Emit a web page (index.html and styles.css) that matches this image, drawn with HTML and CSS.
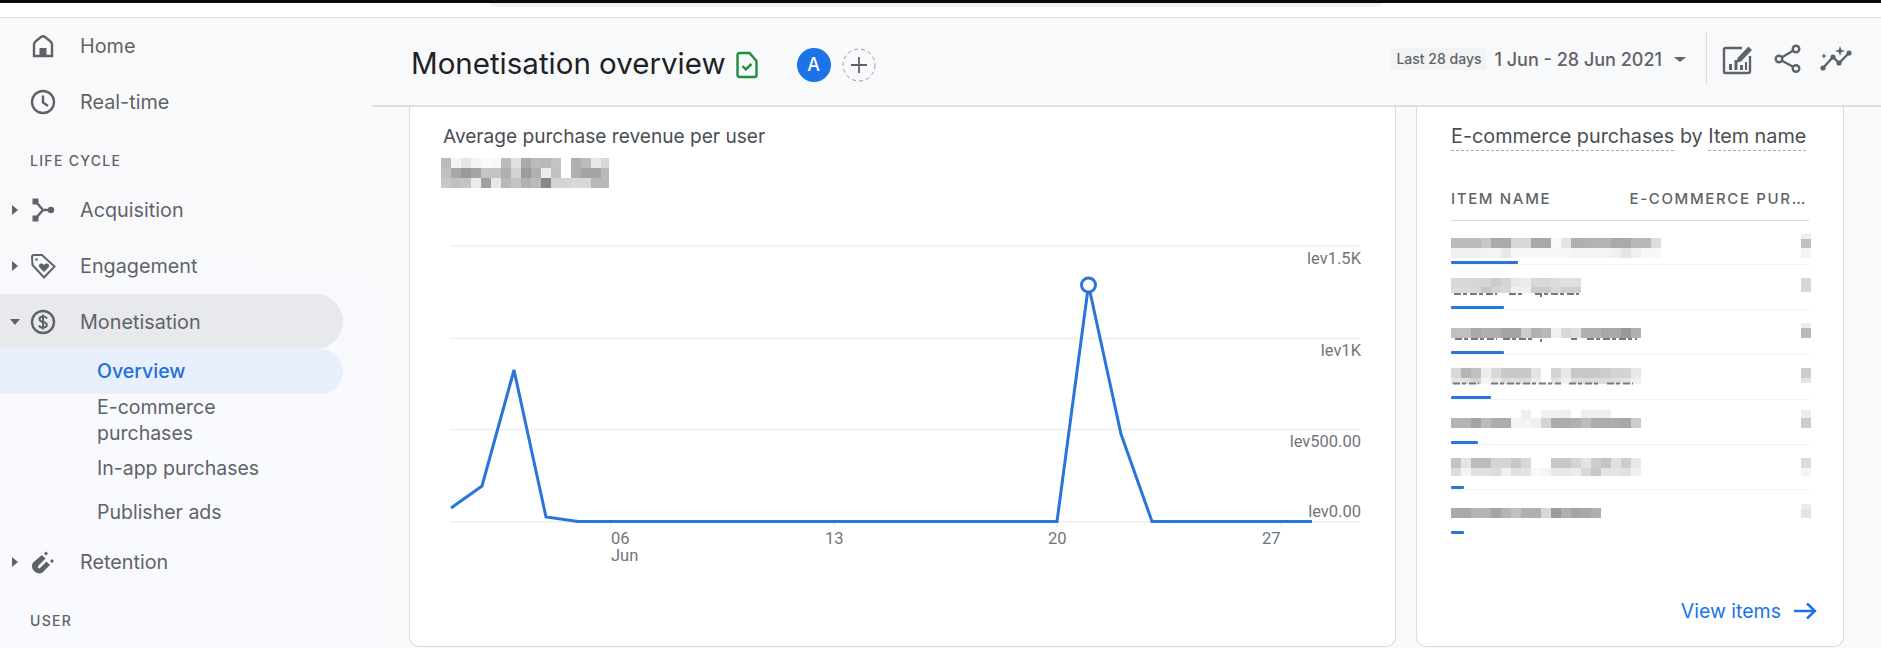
FILE: index.html
```html
<!DOCTYPE html>
<html lang="en">
<head>
<meta charset="utf-8">
<title>Monetisation overview</title>
<link rel="stylesheet" href="styles.css">
</head>
<body>
<div class="topbar"><div class="search-edge"></div></div>
<div class="app">
  <nav class="sidebar">
    <a class="nav-row">
      <span class="caret-slot"></span>
      <svg class="nav-icon" viewBox="0 0 28 28"><path class="ol" d="M5 24V12.500Q5 10.500 7 9L12 5Q14 3.500 16 5L21 9Q23 10.500 23 12.500V24Z"/><rect class="fl" x="10.500" y="16" width="7" height="8"/></svg>
      <span>Home</span>
    </a>
    <a class="nav-row">
      <span class="caret-slot"></span>
      <svg class="nav-icon" viewBox="0 0 28 28"><circle class="ol" cx="14" cy="14" r="11"/><path class="ol" d="M14 7.500V14.500L19 18"/></svg>
      <span>Real-time</span>
    </a>
    <div class="nav-section first">LIFE CYCLE</div>
    <a class="nav-row">
      <span class="caret-slot"><i class="caret-right"></i></span>
      <svg class="nav-icon" viewBox="0 0 28 28"><path class="ol" d="M7 6L14 14L7 22M14 14H22"/><rect class="fl" x="3.500" y="2.500" width="6" height="6"/><rect class="fl" x="3.500" y="19.500" width="6" height="6"/><circle class="fl" cx="22" cy="14" r="3.200"/></svg>
      <span>Acquisition</span>
    </a>
    <a class="nav-row">
      <span class="caret-slot"><i class="caret-right"></i></span>
      <svg class="nav-icon" viewBox="0 0 28 28"><path class="ol thin" d="M3 5Q3 3 5 3H13L25.500 14.500L15 25.500L3.500 13Z"/><circle class="fl" cx="7.500" cy="7.500" r="1.300"/><path class="fl" d="M15 20L10.500 15.500Q9 13 11 11.800Q13 11 15 13Q17 11 19 11.800Q21 13 19.500 15.500Z"/></svg>
      <span>Engagement</span>
    </a>
    <a class="nav-row active">
      <span class="caret-slot"><i class="caret-down"></i></span>
      <svg class="nav-icon" viewBox="0 0 28 28"><circle class="ol" cx="14" cy="14" r="11"/><path class="ol thin" d="M18 10.500Q17 8.500 14 8.500Q10.500 8.500 10.500 11Q10.500 13.300 14 14Q17.800 14.800 17.800 17Q17.800 19.500 14 19.500Q10.800 19.500 10 17.300M14 6.500V21.500"/></svg>
      <span>Monetisation</span>
    </a>
    <a class="sub-row current">Overview</a>
    <a class="sub-row double">E-commerce<br>purchases</a>
    <a class="sub-row">In-app purchases</a>
    <a class="sub-row">Publisher ads</a>
    <a class="nav-row">
      <span class="caret-slot"><i class="caret-right"></i></span>
      <svg class="nav-icon" viewBox="0 0 28 28"><path class="fl" d="M13 7L16.500 10.500L9.500 17.500Q8 20 10.500 20.500L17.500 13.500L21 17L13.500 24.500Q9 27 5 23Q1.500 19 4 14.500Z"/><path class="fl" d="M17 3.500L19 5.500L17 7.500L15 5.500ZM23 11L25 13L23 15L21 13Z"/></svg>
      <span>Retention</span>
    </a>
    <div class="nav-section">USER</div>
  </nav>

  <main class="main">
    <header class="page-head">
      <h1>Monetisation overview</h1>
      <svg class="doc-icon" viewBox="0 0 24 28"><path d="M2.500 4Q2.500 2 4.500 2H14.500L21.500 10V24Q21.500 26 19.500 26H4.500Q2.500 26 2.500 24Z"/><path d="M7.500 15L10.800 18.300L16.500 13"/></svg>
      <span class="avatar">A</span>
      <svg class="add-compare" viewBox="0 0 34 34"><circle cx="17" cy="17" r="16"/><path d="M17 9V25M9 17H25"/></svg>
      <span class="head-spacer"></span>
      <div class="head-tools">
        <span class="date-chip">Last 28 days</span>
        <span class="date-range">1 Jun - 28 Jun 2021</span>
        <i class="date-caret"></i>
        <span class="head-rule"></span>
        <svg class="tool report" viewBox="0 0 32 32"><path class="ol" d="M21 5H4.500Q3 5 3 6.500V29Q3 30 4.500 30H27Q29 30 29 28.500V13"/><path class="fl" d="M16.500 15L27.500 3.500L31 7L20 18.500L16 19.500Z"/><path class="fl" d="M8 21H11V27H8ZM13.500 17H16.500V27H13.500ZM19 22H22V27H19ZM24 19H26V27H24Z"/></svg>
        <svg class="tool share" viewBox="0 0 32 32"><circle class="ol" cx="24" cy="6" r="3.300"/><circle class="ol" cx="7" cy="16" r="3.300"/><circle class="ol" cx="24" cy="25.500" r="3.300"/><path class="ol" d="M10 14.300L21 7.700M10 17.700L21 23.800"/></svg>
        <svg class="tool wide" viewBox="0 0 34 32"><path class="ol" d="M4 25L14 14L20 20L30 10"/><circle class="fl" cx="4" cy="25" r="2.600"/><circle class="fl" cx="14" cy="14" r="2.600"/><circle class="fl" cx="20" cy="20" r="2.600"/><circle class="fl" cx="30" cy="10" r="2.600"/><path class="fl" d="M21 3L22.300 6.700L26 8L22.300 9.300L21 13L19.700 9.300L16 8L19.700 6.700ZM5 10L5.800 12.200L8 13L5.800 13.800L5 16L4.200 13.800L2 13L4.200 12.200Z"/></svg>
      </div>
    </header>

    <div class="cards">
      <section class="card chart-card">
        <h2>Average purchase revenue per user</h2>
        <svg class="mosaic-total" width="168" height="30">
          <g><rect x="0" fill="#bbb"/><rect x="10" fill="#f5f5f5"/><rect x="20" fill="#e5e5e5"/><rect x="30" fill="#f5f5f5"/><rect x="40" fill="#fbfbfb"/><rect x="50" fill="#f8f8f8"/><rect x="60" fill="#bbb"/><rect x="70" fill="#e0e0e0"/><rect x="80" fill="#aaa"/><rect x="90" fill="#bbb"/><rect x="100" fill="#b8b8b8"/><rect x="110" fill="#c4c4c4"/><rect x="130" fill="#b0b0b0"/><rect x="140" fill="#bbb"/><rect x="150" fill="#e8e8e8"/><rect x="160" fill="#d8d8d8"/></g>
          <g transform="translate(0,10)"><rect x="0" fill="#c0c0c0"/><rect x="10" fill="#a8a8a8"/><rect x="20" fill="#999"/><rect x="30" fill="#a4a4a4"/><rect x="40" fill="#c4c4c4"/><rect x="50" fill="#c4c4c4"/><rect x="60" fill="#b0b0b0"/><rect x="70" fill="#d4d4d4"/><rect x="80" fill="#9c9c9c"/><rect x="90" fill="#b0b0b0"/><rect x="100" fill="#ececec"/><rect x="110" fill="#c0c0c0"/><rect x="130" fill="#b0b0b0"/><rect x="140" fill="#a4a4a4"/><rect x="150" fill="#a4a4a4"/><rect x="160" fill="#b8b8b8"/></g>
          <g transform="translate(0,20)"><rect x="0" fill="#c8c8c8"/><rect x="10" fill="#c0c0c0"/><rect x="20" fill="#c4c4c4"/><rect x="30" fill="#ececec"/><rect x="40" fill="#a0a0a0"/><rect x="50" fill="#e8e8e8"/><rect x="60" fill="#b8b8b8"/><rect x="70" fill="#c4c4c4"/><rect x="80" fill="#b0b0b0"/><rect x="90" fill="#bbb"/><rect x="100" fill="#888"/><rect x="110" fill="#d4d4d4"/><rect x="120" fill="#d4d4d4"/><rect x="130" fill="#d8d8d8"/><rect x="140" fill="#d8d8d8"/><rect x="150" fill="#b8b8b8"/><rect x="160" fill="#b8b8b8"/></g>
        </svg>
        <svg class="chart" viewBox="410 230 985 340">
          <path class="grid" d="M450 246H1360M450 338.500H1360M450 429.500H1360M450 521.800H1360"/>
          <path class="tick" d="M611 522V527M834 522V527M1057 522V527M1281 522V527"/>
          <polyline class="series" points="451,508 482,486 514,370 546,517 578,521.500 1057,521.500 1088.500,285 1121,434 1152,521.500 1312,521.500"/>
          <circle class="marker" cx="1088.500" cy="285" r="7"/>
          <text class="yl" x="1361" y="264">lev1.5K</text>
          <text class="yl" x="1361" y="356">lev1K</text>
          <text class="yl" x="1361" y="447">lev500.00</text>
          <text class="yl" x="1361" y="517">lev0.00</text>
          <text class="xl" x="611" y="544">06</text>
          <text class="xl" x="611" y="561">Jun</text>
          <text class="xl" x="825" y="544">13</text>
          <text class="xl" x="1048" y="544">20</text>
          <text class="xl" x="1262" y="544">27</text>
        </svg>
      </section>

      <section class="card items-card">
        <h2><span class="dashed">E-commerce purchases</span> by <span class="dashed">Item name</span></h2>
        <div class="table-head"><span>ITEM NAME</span><span>E-COMMERCE PUR…</span></div>

        <div class="item">
          <svg class="pix" width="360" height="40">
            <g transform="translate(0,17)"><rect x="0" fill="#bbb"/><rect x="10" fill="#bbb"/><rect x="20" fill="#bbb"/><rect x="30" fill="#c8c8c8"/><rect x="40" fill="#aaa"/><rect x="50" fill="#aaa"/><rect x="60" fill="#d8d8d8"/><rect x="70" fill="#d8d8d8"/><rect x="80" fill="#a8a8a8"/><rect x="90" fill="#a8a8a8"/><rect x="100" fill="#fafafa"/><rect x="110" fill="#e4e4e4"/><rect x="120" fill="#b0b0b0"/><rect x="130" fill="#b0b0b0"/><rect x="140" fill="#b4b4b4"/><rect x="150" fill="#b4b4b4"/><rect x="160" fill="#aaa"/><rect x="170" fill="#aaa"/><rect x="180" fill="#b8b8b8"/><rect x="190" fill="#b8b8b8"/><rect x="200" fill="#ddd"/><rect x="350" fill="#c0c0c0"/></g>
            <g transform="translate(0,27)"><rect x="0" fill="#f0f0f0"/><rect x="10" fill="#f0f0f0"/><rect x="20" fill="#f0f0f0"/><rect x="30" fill="#f4f4f4"/><rect x="40" fill="#f4f4f4"/><rect x="50" fill="#e8e8e8"/><rect x="60" fill="#f8f8f8"/><rect x="70" fill="#f8f8f8"/><rect x="80" fill="#f8f8f8"/><rect x="90" fill="#f8f8f8"/><rect x="100" fill="#f8f8f8"/><rect x="110" fill="#f8f8f8"/><rect x="120" fill="#f4f4f4"/><rect x="130" fill="#f4f4f4"/><rect x="140" fill="#f4f4f4"/><rect x="150" fill="#f4f4f4"/><rect x="160" fill="#f0f0f0"/><rect x="170" fill="#e4e4e4"/><rect x="180" fill="#f0f0f0"/><rect x="190" fill="#f8f8f8"/><rect x="200" fill="#f8f8f8"/><rect x="350" fill="#f4f4f4"/></g>
            <g transform="translate(350,13)"><rect x="0" fill="#eee" class="short"/></g>
          </svg>
          <div class="meter"><b style="width:67px"></b></div>
        </div>

        <div class="item">
          <svg class="pix" width="360" height="40">
            <g transform="translate(0,12)"><rect x="0" fill="#d8d8d8"/><rect x="10" fill="#d8d8d8"/><rect x="20" fill="#d4d4d4"/><rect x="30" fill="#d4d4d4"/><rect x="40" fill="#ccc"/><rect x="50" fill="#d4d4d4"/><rect x="60" fill="#e8e8e8"/><rect x="70" fill="#ececec"/><rect x="80" fill="#d8d8d8"/><rect x="90" fill="#d8d8d8"/><rect x="100" fill="#dcdcdc"/><rect x="110" fill="#e0e0e0"/><rect x="120" fill="#e0e0e0"/><rect x="350" fill="#d8d8d8"/></g>
            <g transform="translate(0,21)" class="low"><rect x="0" fill="#dcdcdc"/><rect x="10" fill="#dcdcdc"/><rect x="20" fill="#d8d8d8"/><rect x="30" fill="#c8c8c8"/><rect x="40" fill="#d4d4d4"/><rect x="50" fill="#d8d8d8"/><rect x="60" fill="#f0f0f0"/><rect x="70" fill="#f0f0f0"/><rect x="80" fill="#ccc"/><rect x="90" fill="#ccc"/><rect x="100" fill="#d8d8d8"/><rect x="110" fill="#d0d0d0"/><rect x="120" fill="#d0d0d0"/><rect x="350" fill="#d8d8d8" class="short"/></g>
            <path class="remnant" d="M3 28H46M58 28H74M84 28H128M90 28V31"/>
          </svg>
          <div class="meter"><b style="width:53px"></b></div>
        </div>

        <div class="item">
          <svg class="pix" width="360" height="40">
            <g transform="translate(0,17)"><rect x="0" fill="#c0c0c0"/><rect x="10" fill="#c0c0c0"/><rect x="20" fill="#a8a8a8"/><rect x="30" fill="#b0b0b0"/><rect x="40" fill="#b0b0b0"/><rect x="50" fill="#a4a4a4"/><rect x="60" fill="#a4a4a4"/><rect x="70" fill="#ccc"/><rect x="80" fill="#b0b0b0"/><rect x="90" fill="#b8b8b8"/><rect x="100" fill="#f0f0f0"/><rect x="110" fill="#d8d8d8"/><rect x="120" fill="#e0e0e0"/><rect x="130" fill="#b0b0b0"/><rect x="140" fill="#b0b0b0"/><rect x="150" fill="#a8a8a8"/><rect x="160" fill="#a8a8a8"/><rect x="170" fill="#999"/><rect x="180" fill="#b0b0b0"/><rect x="350" fill="#b8b8b8"/></g>
            <path class="remnant" d="M4 28H46M52 28H82M90 28V31M120 28H126M136 28H186"/>
            <g transform="translate(350,12)"><rect x="0" fill="#ececec" class="short"/></g>
          </svg>
          <div class="meter"><b style="width:53px"></b></div>
        </div>

        <div class="item">
          <svg class="pix" width="360" height="40">
            <g transform="translate(0,12)"><rect x="0" fill="#d8d8d8"/><rect x="10" fill="#b4b4b4"/><rect x="20" fill="#c0c0c0"/><rect x="30" fill="#ececec"/><rect x="40" fill="#d8d8d8"/><rect x="50" fill="#c8c8c8"/><rect x="60" fill="#c8c8c8"/><rect x="70" fill="#c8c8c8"/><rect x="80" fill="#e4e4e4"/><rect x="100" fill="#d4d4d4"/><rect x="110" fill="#e8e8e8"/><rect x="120" fill="#c8c8c8"/><rect x="130" fill="#c8c8c8"/><rect x="140" fill="#c8c8c8"/><rect x="150" fill="#ccc"/><rect x="160" fill="#d4d4d4"/><rect x="170" fill="#d4d4d4"/><rect x="180" fill="#e8e8e8"/><rect x="350" fill="#ccc"/></g>
            <g transform="translate(0,22)" class="low"><rect x="0" fill="#e4e4e4"/><rect x="10" fill="#e0e0e0"/><rect x="20" fill="#d4d4d4"/><rect x="30" fill="#f4f4f4"/><rect x="40" fill="#e8e8e8"/><rect x="50" fill="#dcdcdc"/><rect x="60" fill="#dcdcdc"/><rect x="70" fill="#dcdcdc"/><rect x="80" fill="#ececec"/><rect x="100" fill="#e0e0e0"/><rect x="110" fill="#f0f0f0"/><rect x="120" fill="#dcdcdc"/><rect x="130" fill="#dcdcdc"/><rect x="140" fill="#dcdcdc"/><rect x="150" fill="#dcdcdc"/><rect x="160" fill="#e0e0e0"/><rect x="170" fill="#e4e4e4"/><rect x="180" fill="#f0f0f0"/><rect x="350" fill="#e4e4e4" class="short"/></g>
            <path class="remnant" d="M2 27.500H28M40 27.500H110M118 27.500H150M156 27.500H182"/>
          </svg>
          <div class="meter"><b style="width:40px"></b></div>
        </div>

        <div class="item">
          <svg class="pix" width="360" height="40">
            <g transform="translate(0,9)"><rect x="70" fill="#eee" class="tall8"/><rect x="90" fill="#f2f2f2" class="tall8"/><rect x="100" fill="#f2f2f2" class="tall8"/><rect x="110" fill="#eee" class="tall8"/><rect x="130" fill="#eee" class="tall8"/><rect x="140" fill="#eee" class="tall8"/><rect x="150" fill="#eee" class="tall8"/><rect x="350" fill="#ececec" class="tall8"/></g>
            <g transform="translate(0,17)"><rect x="0" fill="#b4b4b4"/><rect x="10" fill="#b4b4b4"/><rect x="20" fill="#a4a4a4"/><rect x="30" fill="#bcbcbc"/><rect x="40" fill="#acacac"/><rect x="50" fill="#acacac"/><rect x="60" fill="#f4f4f4"/><rect x="70" fill="#f4f4f4"/><rect x="80" fill="#f0f0f0"/><rect x="90" fill="#d4d4d4"/><rect x="100" fill="#acacac"/><rect x="110" fill="#acacac"/><rect x="120" fill="#b0b0b0"/><rect x="130" fill="#bcbcbc"/><rect x="140" fill="#acacac"/><rect x="150" fill="#acacac"/><rect x="160" fill="#acacac"/><rect x="170" fill="#a8a8a8"/><rect x="180" fill="#ccc"/><rect x="350" fill="#ccc"/></g>
          </svg>
          <div class="meter"><b style="width:27px"></b></div>
        </div>

        <div class="item">
          <svg class="pix" width="360" height="40">
            <g transform="translate(0,12)"><rect x="0" fill="#c4c4c4"/><rect x="10" fill="#e4e4e4"/><rect x="20" fill="#bcbcbc"/><rect x="30" fill="#bcbcbc"/><rect x="40" fill="#d4d4d4"/><rect x="50" fill="#d4d4d4"/><rect x="60" fill="#c8c8c8"/><rect x="70" fill="#d8d8d8"/><rect x="100" fill="#c8c8c8"/><rect x="110" fill="#c8c8c8"/><rect x="120" fill="#d4d4d4"/><rect x="130" fill="#e4e4e4"/><rect x="140" fill="#ccc"/><rect x="150" fill="#c4c4c4"/><rect x="160" fill="#e0e0e0"/><rect x="170" fill="#ccc"/><rect x="180" fill="#e8e8e8"/><rect x="350" fill="#dcdcdc"/></g>
            <g transform="translate(0,22)"><rect x="0" fill="#dcdcdc" class="tall8"/><rect x="10" fill="#f4f4f4" class="tall8"/><rect x="20" fill="#e0e0e0" class="tall8"/><rect x="30" fill="#e0e0e0" class="tall8"/><rect x="40" fill="#dcdcdc" class="tall8"/><rect x="50" fill="#f0f0f0" class="tall8"/><rect x="60" fill="#e0e0e0" class="tall8"/><rect x="70" fill="#e4e4e4" class="tall8"/><rect x="80" fill="#f8f8f8" class="tall8"/><rect x="90" fill="#f4f4f4" class="tall8"/><rect x="100" fill="#e8e8e8" class="tall8"/><rect x="110" fill="#e8e8e8" class="tall8"/><rect x="120" fill="#ececec" class="tall8"/><rect x="130" fill="#d8d8d8" class="tall8"/><rect x="140" fill="#c8c8c8" class="tall8"/><rect x="150" fill="#e4e4e4" class="tall8"/><rect x="160" fill="#e4e4e4" class="tall8"/><rect x="170" fill="#e0e0e0" class="tall8"/><rect x="180" fill="#f0f0f0" class="tall8"/><rect x="350" fill="#f4f4f4" class="tall8"/></g>
          </svg>
          <div class="meter"><b style="width:13px"></b></div>
        </div>

        <div class="item last">
          <svg class="pix" width="360" height="40">
            <g transform="translate(0,17)"><rect x="0" fill="#aaa"/><rect x="10" fill="#a8a8a8"/><rect x="20" fill="#b4b4b4"/><rect x="30" fill="#b4b4b4"/><rect x="40" fill="#a4a4a4"/><rect x="50" fill="#b4b4b4"/><rect x="60" fill="#c0c0c0"/><rect x="70" fill="#b0b0b0"/><rect x="80" fill="#b0b0b0"/><rect x="90" fill="#d8d8d8"/><rect x="100" fill="#9c9c9c"/><rect x="110" fill="#b0b0b0"/><rect x="120" fill="#a4a4a4"/><rect x="130" fill="#a8a8a8"/><rect x="140" fill="#b0b0b0"/><rect x="350" fill="#e4e4e4"/></g>
            <g transform="translate(350,13)"><rect x="0" fill="#ececec" class="short"/></g>
          </svg>
          <div class="meter"><b style="width:13px"></b></div>
        </div>

        <a class="view-link">View items
          <svg viewBox="0 0 24 18"><path d="M1 9H22M14 1.500L22 9L14 16.500"/></svg>
        </a>
      </section>
    </div>
  </main>
</div>
</body>
</html>
```

FILE: styles.css
```css
* { box-sizing: border-box; }
html, body { margin: 0; height: 100%; }
body {
  width: 1881px;
  height: 648px;
  overflow: hidden;
  background: #f9fafc;
  border-top: 3px solid #0b0b0c;
  font-family: Inter, Roboto, "Liberation Sans", sans-serif;
  color: #5f6368;
}
.topbar {
  height: 15px;
  background: #fff;
  border-bottom: 1px solid #e0e1e3;
}
.search-edge {
  width: 892px;
  height: 4px;
  margin-left: 490px;
  background: #f1f3f4;
  border-radius: 0 0 6px 6px;
}
.app { display: flex; height: 630px; }

/* Sidebar */
.sidebar {
  flex: 0 0 372px;
  background: linear-gradient(#f9f9fa, #f8faff);
  font-size: 19.500px;
}
.nav-row {
  display: flex;
  align-items: center;
  width: 343px;
  height: 56px;
  font-size: 19.800px;
  border-radius: 0 28px 28px 0;
}
.nav-row span:last-child { margin-left: 23px; }
.caret-slot {
  flex: 0 0 29px;
  display: flex;
  justify-content: flex-end;
  padding-right: 7px;
}
.caret-right {
  border-left: 6px solid #5f6368;
  border-top: 5px solid transparent;
  border-bottom: 5px solid transparent;
  margin-right: 4px;
}
.caret-down {
  border-top: 6px solid #5f6368;
  border-left: 5px solid transparent;
  border-right: 5px solid transparent;
  margin-right: 2px;
}
.nav-icon { width: 28px; height: 28px; flex: none; }
.ol { fill: none; stroke: #5f6368; stroke-width: 2.400; }
.thin { stroke-width: 2; }
.fl { fill: #5f6368; }
.nav-section {
  height: 52px;
  padding: 23px 0 0 30px;
  font-size: 14px;
  line-height: 16px;
  font-weight: 500;
  letter-spacing: 1.300px;
}
.active { background: #e8e9ed; height: 55px; }
.sub-row {
  display: block;
  width: 343px;
  height: 44px;
  padding-left: 97px;
  line-height: 44px;
}
.current {
  height: 45px;
  line-height: 45px;
  color: #1f6fdc;
  font-weight: 500;
  background: #e8f0fe;
  border-radius: 0 23px 23px 0;
}
.double { height: 52px; line-height: 26px; }

/* Main column */
.main { flex: 1; min-width: 0; display: flex; flex-direction: column; }
.page-head {
  display: flex;
  align-items: center;
  height: 89px;
  padding: 2px 28px 0 39px;
  background: #f8f9fa;
  border-bottom: 2px solid #dfe0e2;
}
h1 {
  margin: 0;
  font-size: 29.500px;
  font-weight: 400;
  color: #202124;
}
.doc-icon { width: 24px; height: 28px; margin: 5px 0 0 9px; }
.doc-icon path { fill: none; stroke: #1e8e3e; stroke-width: 2.400; }
.avatar {
  width: 34px;
  height: 34px;
  margin: 5px 0 0 38px;
  border-radius: 50%;
  background: #1a73e8;
  color: #fff;
  font-size: 18px;
  font-weight: 500;
  line-height: 34px;
  text-align: center;
}
.add-compare { width: 34px; height: 34px; margin: 5px 0 0 11px; }
.add-compare circle { fill: none; stroke: #9aa0a6; stroke-width: 1; stroke-dasharray: 4 3; }
.add-compare path { fill: none; stroke: #5f6368; stroke-width: 1.800; }
.head-spacer { flex: 1; }
.head-tools { display: flex; align-items: center; margin-bottom: 7px; }
.date-chip {
  height: 22px;
  padding: 0 5px;
  background: #f1f3f4;
  font-size: 14px;
  font-weight: 500;
  line-height: 22px;
}
.date-range { margin-left: 8px; font-size: 18px; font-weight: 500; }
.date-caret {
  margin: 0 20px 0 12px;
  border-top: 5px solid #5f6368;
  border-left: 6px solid transparent;
  border-right: 6px solid transparent;
}
.head-rule { width: 1px; height: 52px; background: #dadce0; margin-right: 14px; }
.tool { width: 32px; height: 32px; }
.tool.report { margin-right: 19px; }
.tool.share { margin-right: 15px; }
.tool.wide { width: 34px; }

/* Cards */
.cards {
  flex: 1;
  min-height: 0;
  display: flex;
  gap: 20px;
  padding: 0 38px 1px 37px;
}
.card {
  background: #fff;
  border: 1px solid #dadce0;
  border-top: 0;
  border-radius: 0 0 10px 10px;
}
.chart-card { flex: 0 0 987px; padding: 17px 0 0 33px; }
.items-card { flex: 1; padding: 17px 34px 0 34px; display: flex; flex-direction: column; }
h2 {
  margin: 0;
  font-size: 19.100px;
  line-height: 24px;
  font-weight: 400;
  color: #4a4e52;
  white-space: nowrap;
}
.items-card h2 { font-size: 19.800px; }
.dashed { border-bottom: 1.500px dashed #a8abaf; padding-bottom: 2px; }
.mosaic-total { display: block; margin: 10px 0 0 -2px; filter: blur(.5px); }
.mosaic-total rect, .pix rect { width: 10px; height: 10px; }
.chart { display: block; width: 985px; height: 340px; margin: 42px 0 0 -33px; font-family: Roboto, sans-serif; }
.grid { fill: none; stroke: #eeeff0; stroke-width: 1.400; }
.tick { fill: none; stroke: #e6e7e8; stroke-width: 1; }
.series { fill: none; stroke: #2a74da; stroke-width: 3; stroke-linejoin: miter; }
.marker { fill: #fff; stroke: #2a74da; stroke-width: 3; }
.yl, .xl { font-size: 16.500px; fill: #70757a; }
.yl { text-anchor: end; }
.table-head {
  display: flex;
  justify-content: space-between;
  height: 47px;
  margin-top: 26px;
  padding: 15px 2px 0 0;
  border-bottom: 1px solid #dadce0;
  font-size: 15px;
  font-weight: 500;
  letter-spacing: 1.650px;
  line-height: 20px;
  white-space: nowrap;
}
.item { height: 45px; width: 358px; }
.pix { display: block; filter: blur(.5px); }
.pix .short { height: 5px; }
.pix .tall8 { height: 8px; }
.low rect { height: 6px; }
.remnant { fill: none; stroke: #77797c; stroke-width: 2; stroke-dasharray: 7 2 4 3; }
.meter {
  height: 4px;
  border-bottom: 1px solid #f1f3f4;
}
.meter b { display: block; height: 3px; background: #2a74da; border-radius: 1px; }
.last .meter { border: 0; }
.view-link {
  display: flex;
  align-items: center;
  justify-content: flex-end;
  gap: 12px;
  margin: 63px -8px 0 0;
  color: #1a73e8;
  font-size: 19.500px;
}
.view-link svg { width: 24px; height: 18px; }
.view-link path { fill: none; stroke: #1a73e8; stroke-width: 2.400; }
```
